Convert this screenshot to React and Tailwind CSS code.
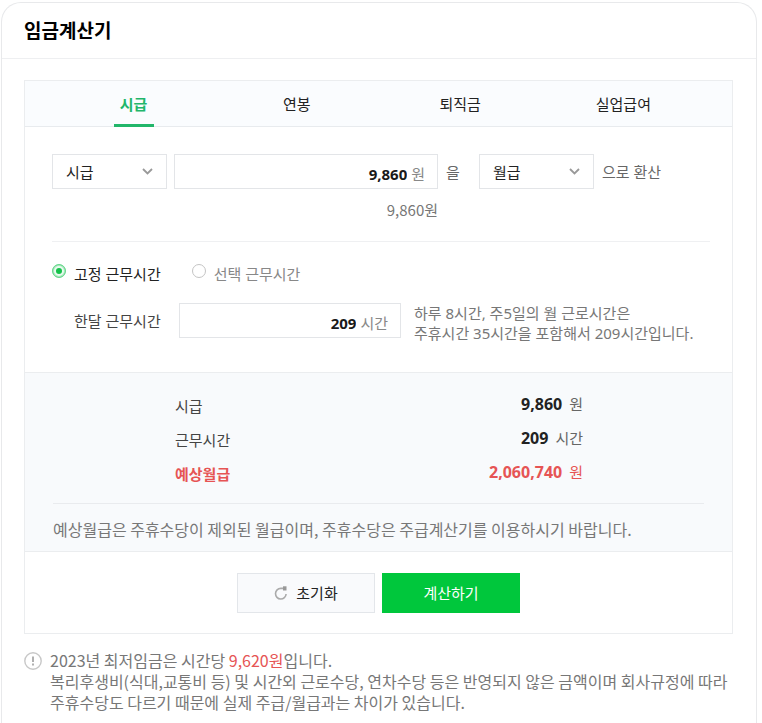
import { useState } from 'react';

const TABS = ['시급', '연봉', '퇴직금', '실업급여'];

function UnitSelect({ label, value, options }) {
  return (
    <div className="relative w-[115px] shrink-0">
      <select
        aria-label={label}
        defaultValue={value}
        className="block h-[35px] w-full appearance-none border border-[#e3e5e8] bg-white pr-8 pl-[13px] text-[#222]"
      >
        {options.map((option) => (
          <option key={option}>{option}</option>
        ))}
      </select>
      <svg
        className="pointer-events-none absolute top-[14px] right-[14px]"
        width="11"
        height="8"
        viewBox="0 0 11 8"
        fill="none"
        stroke="#999"
        strokeWidth="1.800"
        aria-hidden="true"
      >
        <path d="M1 1l4.500 4.500L10 1" />
      </svg>
    </div>
  );
}

function NumberField({ id, label, value, unit, onChange }) {
  return (
    <div className="flex h-[35px] items-center border border-[#e3e5e8] bg-white pt-1 pr-3">
      <input
        id={id}
        aria-label={label}
        inputMode="numeric"
        value={value}
        onChange={(event) => onChange(event.target.value)}
        className="w-0 min-w-0 flex-1 bg-transparent text-right font-bold text-[#1a1a1a] outline-none"
      />
      <span className="ml-1 text-[#888]">{unit}</span>
    </div>
  );
}

function WorkTypeRadio({ id, label, checked, onChange }) {
  return (
    <div className="flex items-start">
      <input
        id={id}
        type="radio"
        name="workType"
        checked={checked}
        onChange={onChange}
        className="size-[14px] appearance-none rounded-full border border-[#c4c4c4] bg-white checked:border-[#6bd88f] checked:bg-[#14c24a] checked:shadow-[inset_0_0_0_1px_#a5e8bb,inset_0_0_0_3px_#e9faef]"
      />
      <label htmlFor={id} className={checked ? 'ml-2 text-[#222]' : 'ml-2 text-[#888]'}>
        {label}
      </label>
    </div>
  );
}

function ResultRow({ label, value, unit, highlight }) {
  return (
    <div className={highlight ? 'flex h-[34px] items-center text-[#e65454]' : 'flex h-[34px] items-center text-[#444]'}>
      <dt className={highlight ? 'flex-1 pt-1 font-bold' : 'flex-1 pt-1'}>{label}</dt>
      <dd>
        <strong className={highlight ? 'text-base font-bold' : 'text-base font-bold text-[#222]'}>{value}</strong>
        <span className={highlight ? 'ml-[7px]' : 'ml-[7px] text-[#666]'}>{unit}</span>
      </dd>
    </div>
  );
}

export default function App() {
  const [wage, setWage] = useState('9,860');
  const [hours, setHours] = useState('209');
  const [workType, setWorkType] = useState('fixed');

  return (
    <div className="flex min-h-screen flex-col bg-white pt-[2px] pr-[5px] pl-px font-['Noto_Sans','Noto_Sans_CJK_KR',sans-serif] text-[15px] leading-5">
      <section className="flex-1 rounded-t-[20px] border border-b-0 border-[#e8e9eb]">
        <header className="border-b border-[#eeeff1] pt-4 pb-[15px] pl-[22px]">
          <h1 className="text-[19px] leading-6 font-bold text-black">임금계산기</h1>
        </header>

        <div className="pt-[21px] pr-[23px] pb-2 pl-[22px]">
          <form className="border border-[#ebedef]" onSubmit={(event) => event.preventDefault()}>
            <nav className="border-b border-[#e8ebee] bg-[#fafcfe] px-[27px]">
              <ul className="grid grid-cols-4">
                {TABS.map((tab, index) => (
                  <li key={tab} className="flex justify-center">
                    <a
                      href="#"
                      aria-current={index === 0 ? 'page' : undefined}
                      className={
                        index === 0
                          ? '-mb-px w-10 border-b-[3px] border-[#22b66a] pt-[13px] pb-[10px] text-center font-bold text-[#22b66a]'
                          : 'px-[6px] pt-[13px] pb-3 text-[#222]'
                      }
                    >
                      {tab}
                    </a>
                  </li>
                ))}
              </ul>
            </nav>

            <div className="pt-[27px] pr-[22px] pb-[29px] pl-[27px]">
              <div className="flex items-start border-b border-[#eff0f2] pb-[21px] text-[#666]">
                <UnitSelect label="기준 급여" value="시급" options={['시급', '일급', '주급', '월급', '연봉']} />
                <div className="ml-[7px] flex-1">
                  <NumberField id="wage" label="급여 금액" value={wage} unit="원" onChange={setWage} />
                  <p className="mt-[11px] text-right font-['Noto_Sans_CJK_KR',sans-serif] text-[#777]">{wage}원</p>
                </div>
                <span className="mt-2 ml-2">을</span>
                <div className="ml-[19px]">
                  <UnitSelect label="환산 급여" value="월급" options={['시급', '일급', '주급', '월급', '연봉']} />
                </div>
                <span className="mt-2 mr-[49px] ml-2">으로 환산</span>
              </div>

              <div role="radiogroup" aria-label="근무시간 유형" className="flex gap-[31px] pt-[22px]">
                <WorkTypeRadio
                  id="fixed"
                  label="고정 근무시간"
                  checked={workType === 'fixed'}
                  onChange={() => setWorkType('fixed')}
                />
                <WorkTypeRadio
                  id="custom"
                  label="선택 근무시간"
                  checked={workType === 'custom'}
                  onChange={() => setWorkType('custom')}
                />
              </div>

              <div className="mt-[19px] flex items-start">
                <label htmlFor="hours" className="mt-2 ml-[22px] w-[105px] text-[#444]">
                  한달 근무시간
                </label>
                <div className="flex-1">
                  <NumberField id="hours" value={hours} unit="시간" onChange={setHours} />
                </div>
                <p className="ml-[13px] w-[296px] text-[#777]">
                  하루 8시간, 주5일의 월 근로시간은
                  <br />
                  주휴시간 35시간을 포함해서 209시간입니다.
                </p>
              </div>
            </div>

            <div className="border-y border-[#ebedef] bg-[#f8fafc] pt-[14px] pr-7 pb-3 pl-7">
              <dl className="mr-[121px] ml-[122px]">
                <ResultRow label="시급" value="9,860" unit="원" />
                <ResultRow label="근무시간" value="209" unit="시간" />
                <ResultRow label="예상월급" value="2,060,740" unit="원" highlight />
              </dl>
              <p className="mt-[14px] border-t border-[#e9ebee] pt-[15px] font-['Noto_Sans_CJK_KR',sans-serif] text-base leading-5 text-[#777]">
                예상월급은 주휴수당이 제외된 월급이며, 주휴수당은 주급계산기를 이용하시기 바랍니다.
              </p>
            </div>

            <div className="flex justify-center gap-[7px] pt-[21px] pb-5">
              <button
                type="reset"
                className="flex h-10 w-[138px] items-center justify-center gap-2 border border-[#e3e6ea] bg-[#f9fafc] text-[#222]"
              >
                <svg width="14" height="14" viewBox="0 0 14 14" fill="none" aria-hidden="true">
                  <path d="M10.500 2.400H6.800A5.300 5.300 0 1 0 12.100 8" stroke="#aaa" strokeWidth="1.600" />
                  <path d="M9 0.300h3.500v4.200H9z" fill="#999" />
                </svg>
                초기화
              </button>
              <button type="submit" className="h-10 w-[138px] bg-[#00c73c] text-white">
                계산하기
              </button>
            </div>
          </form>

          <div className="mt-4 flex items-start gap-2 font-['Noto_Sans_CJK_KR',sans-serif] text-base leading-[21px] text-[#777]">
            <svg className="mt-[2px] shrink-0" width="18" height="18" viewBox="0 0 18 18" fill="none" aria-hidden="true">
              <circle cx="9" cy="9" r="8.200" stroke="#c8c8c8" strokeWidth="1.400" />
              <path d="M9 4.500v5.500M9 11.500v2" stroke="#b0b0b0" strokeWidth="2" />
            </svg>
            <p>
              2023년 최저임금은 시간당 <em className="text-[#e65454] not-italic">9,620원</em>입니다.
              <br />
              복리후생비(식대,교통비 등) 및 시간외 근로수당, 연차수당 등은 반영되지 않은 금액이며 회사규정에 따라
              <br />
              주휴수당도 다르기 때문에 실제 주급/월급과는 차이가 있습니다.
            </p>
          </div>
        </div>
      </section>
    </div>
  );
}
